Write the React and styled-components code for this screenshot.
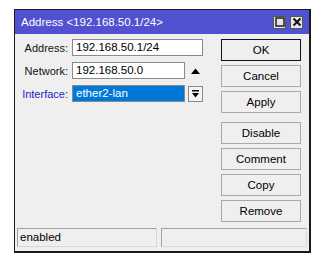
import React from 'react'
import styled, { createGlobalStyle } from 'styled-components'

const GlobalStyle = createGlobalStyle`
  html, body {
    margin: 0;
    padding: 0;
    background: #ffffff;
  }
  body {
    font-family: "Liberation Sans", Arial, sans-serif;
    font-size: 11px;
  }
`

const rows = [
  { label: 'Address:', value: '192.168.50.1/24', kind: 'plain' },
  { label: 'Network:', value: '192.168.50.0', kind: 'up' },
  { label: 'Interface:', value: 'ether2-lan', kind: 'select' },
]

const actions = [
  { name: 'OK', primary: true },
  { name: 'Cancel' },
  { name: 'Apply' },
  { name: 'Disable', gapBefore: true },
  { name: 'Comment' },
  { name: 'Copy' },
  { name: 'Remove' },
]

const App = () => {
  return (
    <Page>
      <GlobalStyle />
      <Window>
        <TitleBar>
          <TitleText>Address &lt;192.168.50.1/24&gt;</TitleText>
          <TitleButtons>
            <TitleButton>
              <svg width="10" height="10" viewBox="0 0 10 10">
                <rect x="1" y="1" width="8" height="8" fill="none" stroke="#111" strokeWidth="1.4" />
              </svg>
            </TitleButton>
            <TitleButton>
              <svg width="10" height="10" viewBox="0 0 10 10">
                <path d="M1.5 1.5 L8.5 8.5 M8.5 1.5 L1.5 8.5" stroke="#111" strokeWidth="2" />
              </svg>
            </TitleButton>
          </TitleButtons>
        </TitleBar>

        <Main>
          <Form>
            {rows.map((row) => (
              <Row key={row.label}>
                <Label $active={row.kind === 'select'}>{row.label}</Label>
                <Field $wide={row.kind === 'plain'} $selected={row.kind === 'select'}>
                  {row.value}
                </Field>
                {row.kind === 'up' && (
                  <ArrowCell>
                    <svg width="9" height="6" viewBox="0 0 9 6">
                      <path d="M0 6 L4.5 0.5 L9 6 Z" fill="#000" />
                    </svg>
                  </ArrowCell>
                )}
                {row.kind === 'select' && (
                  <DropButton>
                    <svg width="7" height="8" viewBox="0 0 7 8">
                      <rect x="0" y="0" width="7" height="1.5" fill="#000" />
                      <path d="M0 3 L7 3 L3.5 7.5 Z" fill="#000" />
                    </svg>
                  </DropButton>
                )}
              </Row>
            ))}
          </Form>

          <Buttons>
            {actions.map((a) => (
              <ActionButton key={a.name} $primary={a.primary} $gapBefore={a.gapBefore}>
                {a.name}
              </ActionButton>
            ))}
          </Buttons>
        </Main>

        <StatusBar>
          <StatusPanel $width={140}>enabled</StatusPanel>
          <StatusPanel $width={146} />
        </StatusBar>
      </Window>
    </Page>
  )
}

export default App

const Page = styled.div`
  padding: 9px 0 0 14px;
`

const Window = styled.div`
  box-sizing: border-box;
  width: 297px;
  height: 244px;
  display: flex;
  flex-direction: column;
  background: #efefef;
  border: 1px solid #1a1a1a;
  border-right-width: 2px;
  border-bottom-width: 2px;
`

const TitleBar = styled.div`
  height: 24px;
  display: flex;
  align-items: center;
  justify-content: space-between;
  background: #5151d2;
  padding: 0 6px 0 6px;
`

const TitleText = styled.span`
  color: #ffffff;
  font-size: 11.5px;
`

const TitleButtons = styled.div`
  display: flex;
  gap: 4px;
`

const TitleButton = styled.div`
  box-sizing: border-box;
  width: 13px;
  height: 13px;
  display: flex;
  align-items: center;
  justify-content: center;
  background: #e6e6e6;
  border: 1px solid #555;
`

const Main = styled.div`
  flex: 1;
  display: flex;
  padding: 5px 8px 0 0;
`

const Form = styled.div`
  flex: 1;
  display: flex;
  flex-direction: column;
  gap: 6px;
  padding-left: 3px;
`

const Row = styled.div`
  display: flex;
  align-items: center;
  height: 17px;
`

const Label = styled.span`
  width: 50px;
  text-align: right;
  margin-right: 4px;
  color: ${({ $active }) => ($active ? '#2424c4' : '#111')};
`

const Field = styled.div`
  box-sizing: border-box;
  width: ${({ $wide }) => ($wide ? '131px' : '113px')};
  height: 17px;
  line-height: 15px;
  padding-left: 3px;
  border: 1px solid #8a8a8a;
  background: ${({ $selected }) => ($selected ? '#0078d7' : '#ffffff')};
  color: ${({ $selected }) => ($selected ? '#ffffff' : '#000')};
  font-size: 11.5px;
  white-space: nowrap;
  overflow: hidden;
`

const ArrowCell = styled.div`
  width: 18px;
  display: flex;
  justify-content: center;
  margin-left: 1px;
`

const DropButton = styled.div`
  box-sizing: border-box;
  width: 15px;
  height: 16px;
  margin-left: 3px;
  display: flex;
  align-items: center;
  justify-content: center;
  background: #f4f4f4;
  border: 1px solid #8a8a8a;
`

const Buttons = styled.div`
  width: 80px;
  display: flex;
  flex-direction: column;
  gap: 4px;
`

const ActionButton = styled.div`
  box-sizing: border-box;
  height: 22px;
  display: flex;
  align-items: center;
  justify-content: center;
  background: #efefef;
  border: 1px solid ${({ $primary }) => ($primary ? '#111' : '#a9a9a9')};
  margin-top: ${({ $gapBefore }) => ($gapBefore ? '5px' : '0')};
  color: #000;
  font-size: 11.5px;
`

const StatusBar = styled.div`
  display: flex;
  gap: 4px;
  padding: 0 0 4px 2px;
`

const StatusPanel = styled.div`
  box-sizing: border-box;
  width: ${({ $width }) => $width}px;
  height: 19px;
  line-height: 17px;
  padding-left: 2px;
  border: 1px solid #a0a0a0;
  border-right-color: #d8d8d8;
  border-bottom-color: #d8d8d8;
  color: #000;
  font-size: 11.5px;
`
